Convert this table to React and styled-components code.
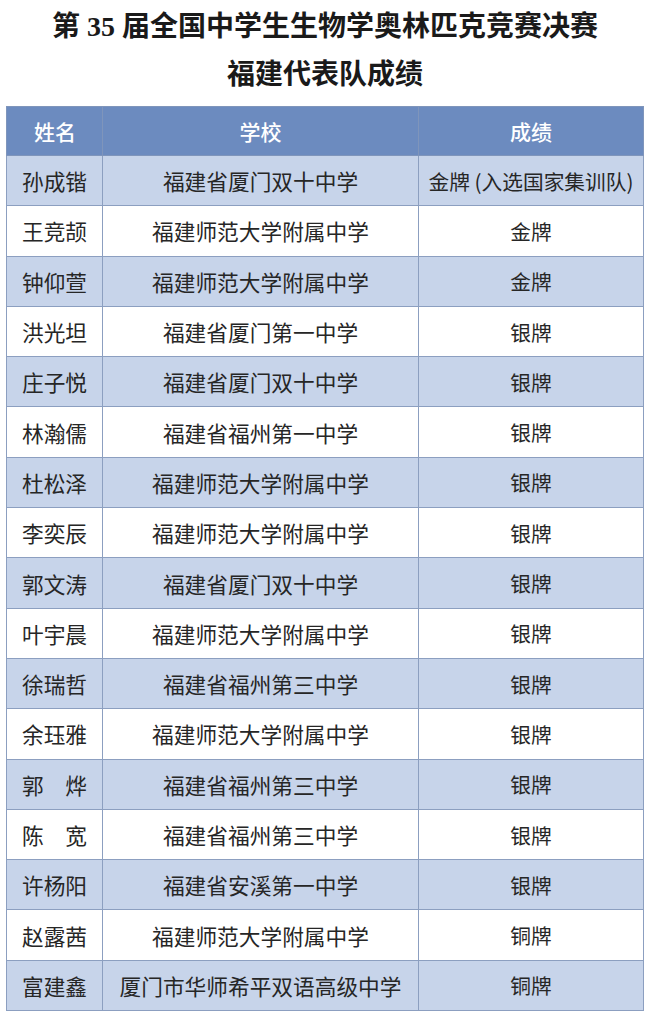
import React from 'react';
import styled, { createGlobalStyle } from 'styled-components';

const GlobalStyle = createGlobalStyle`
  html, body {
    margin: 0;
    padding: 0;
    background: #fff;
  }
  body {
    font-family: 'Noto Sans CJK SC', 'Noto Sans', sans-serif;
  }
`;

const Page = styled.div`
  width: 650px;
  padding-top: 3px;
`;

const Title = styled.h1`
  margin: 0;
  font-family: 'Liberation Serif', 'Noto Sans CJK SC', serif;
  font-size: 28px;
  line-height: 48px;
  font-weight: 700;
  color: #1a1a1a;
  text-align: center;
`;

const Table = styled.table`
  margin: 7px 0 0 6px;
  width: 637px;
  border-collapse: collapse;
  table-layout: fixed;
  border: 1px solid #7f95bb;
`;

const Row = styled.tr`
  height: ${p => (p.$head ? '49px' : '50.3px')};
  background: ${p => (p.$head ? '#6c8bbf' : p.$striped ? '#c7d4ea' : '#ffffff')};
`;

const HeadCell = styled.th`
  padding: 0;
  border: 1px solid #7f95bb;
  color: #fff;
  font-size: 21px;
  font-weight: 500;
  text-align: ${p => (p.$left ? 'left' : 'center')};
  padding-left: ${p => (p.$left ? '27px' : '0')};
`;

const Cell = styled.td`
  padding: 0;
  border: 1px solid #8c9fc0;
  color: #262626;
  font-size: ${p => (p.$result ? '20.7px' : '21.7px')};
  font-weight: 400;
  text-align: center;
  white-space: nowrap;
`;

const rows = [
  ['孙成锴', '福建省厦门双十中学', '金牌 (入选国家集训队)'],
  ['王竞颉', '福建师范大学附属中学', '金牌'],
  ['钟仰萱', '福建师范大学附属中学', '金牌'],
  ['洪光坦', '福建省厦门第一中学', '银牌'],
  ['庄子悦', '福建省厦门双十中学', '银牌'],
  ['林瀚儒', '福建省福州第一中学', '银牌'],
  ['杜松泽', '福建师范大学附属中学', '银牌'],
  ['李奕辰', '福建师范大学附属中学', '银牌'],
  ['郭文涛', '福建省厦门双十中学', '银牌'],
  ['叶宇晨', '福建师范大学附属中学', '银牌'],
  ['徐瑞哲', '福建省福州第三中学', '银牌'],
  ['余珏雅', '福建师范大学附属中学', '银牌'],
  ['郭　烨', '福建省福州第三中学', '银牌'],
  ['陈　宽', '福建省福州第三中学', '银牌'],
  ['许杨阳', '福建省安溪第一中学', '银牌'],
  ['赵露茜', '福建师范大学附属中学', '铜牌'],
  ['富建鑫', '厦门市华师希平双语高级中学', '铜牌'],
];

export default function App() {
  return (
    <Page>
      <GlobalStyle />
      <Title>
        第 35 届全国中学生生物学奥林匹克竞赛决赛
        <br />
        福建代表队成绩
      </Title>
      <Table>
        <colgroup>
          <col style={{ width: '96px' }} />
          <col style={{ width: '316px' }} />
          <col style={{ width: '225px' }} />
        </colgroup>
        <thead>
          <Row $head>
            <HeadCell $left>姓名</HeadCell>
            <HeadCell>学校</HeadCell>
            <HeadCell>成绩</HeadCell>
          </Row>
        </thead>
        <tbody>
          {rows.map((r, i) => (
            <Row key={i} $striped={i % 2 === 0}>
              <Cell>{r[0]}</Cell>
              <Cell>{r[1]}</Cell>
              <Cell $result>{r[2]}</Cell>
            </Row>
          ))}
        </tbody>
      </Table>
    </Page>
  );
}
